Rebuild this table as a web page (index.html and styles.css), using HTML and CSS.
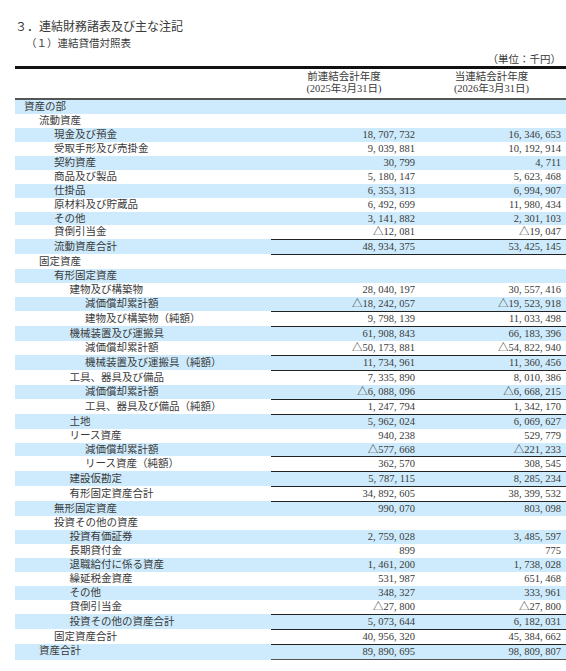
FILE: index.html
```html
<!DOCTYPE html>
<html lang="ja">
<head>
<meta charset="UTF-8" />
<meta name="viewport" content="width=device-width, initial-scale=1" />
<title>連結貸借対照表</title>
<link rel="stylesheet" href="styles.css">
</head>
<body>
  <h1 class="title">３．連結財務諸表及び主な注記</h1>
  <h2 class="subtitle">（１）連結貸借対照表</h2>
  <div class="unit">（単位：千円）</div>

  <section class="sheet" aria-label="連結貸借対照表">
    <div class="head">
      <div></div>
      <div class="period">前連結会計年度<br>(2025年3月31日)</div>
      <div class="period">当連結会計年度<br>(2026年3月31日)</div>
    </div>

    <div class="rows">
      <div class="row l0"><span class="label">資産の部</span><span class="num"></span><span class="num"></span></div>
      <div class="row l1"><span class="label">流動資産</span><span class="num"></span><span class="num"></span></div>
      <div class="row l2"><span class="label">現金及び預金</span><span class="num">18, 707, 732</span><span class="num">16, 346, 653</span></div>
      <div class="row l2"><span class="label">受取手形及び売掛金</span><span class="num">9, 039, 881</span><span class="num">10, 192, 914</span></div>
      <div class="row l2"><span class="label">契約資産</span><span class="num">30, 799</span><span class="num">4, 711</span></div>
      <div class="row l2"><span class="label">商品及び製品</span><span class="num">5, 180, 147</span><span class="num">5, 623, 468</span></div>
      <div class="row l2"><span class="label">仕掛品</span><span class="num">6, 353, 313</span><span class="num">6, 994, 907</span></div>
      <div class="row l2"><span class="label">原材料及び貯蔵品</span><span class="num">6, 492, 699</span><span class="num">11, 980, 434</span></div>
      <div class="row l2"><span class="label">その他</span><span class="num">3, 141, 882</span><span class="num">2, 301, 103</span></div>
      <div class="row l2"><span class="label">貸倒引当金</span><span class="num">△12, 081</span><span class="num">△19, 047</span></div>
      <div class="row l2 bt"><span class="label">流動資産合計</span><span class="num">48, 934, 375</span><span class="num">53, 425, 145</span></div>
      <div class="row l1 bt"><span class="label">固定資産</span><span class="num"></span><span class="num"></span></div>
      <div class="row l2"><span class="label">有形固定資産</span><span class="num"></span><span class="num"></span></div>
      <div class="row l3"><span class="label">建物及び構築物</span><span class="num">28, 040, 197</span><span class="num">30, 557, 416</span></div>
      <div class="row l4"><span class="label">減価償却累計額</span><span class="num">△18, 242, 057</span><span class="num">△19, 523, 918</span></div>
      <div class="row l4 bt"><span class="label">建物及び構築物（純額）</span><span class="num">9, 798, 139</span><span class="num">11, 033, 498</span></div>
      <div class="row l3 bt"><span class="label">機械装置及び運搬具</span><span class="num">61, 908, 843</span><span class="num">66, 183, 396</span></div>
      <div class="row l4"><span class="label">減価償却累計額</span><span class="num">△50, 173, 881</span><span class="num">△54, 822, 940</span></div>
      <div class="row l4 bt"><span class="label">機械装置及び運搬具（純額）</span><span class="num">11, 734, 961</span><span class="num">11, 360, 456</span></div>
      <div class="row l3 bt"><span class="label">工具、器具及び備品</span><span class="num">7, 335, 890</span><span class="num">8, 010, 386</span></div>
      <div class="row l4"><span class="label">減価償却累計額</span><span class="num">△6, 088, 096</span><span class="num">△6, 668, 215</span></div>
      <div class="row l4 bt"><span class="label">工具、器具及び備品（純額）</span><span class="num">1, 247, 794</span><span class="num">1, 342, 170</span></div>
      <div class="row l3 bt"><span class="label">土地</span><span class="num">5, 962, 024</span><span class="num">6, 069, 627</span></div>
      <div class="row l3"><span class="label">リース資産</span><span class="num">940, 238</span><span class="num">529, 779</span></div>
      <div class="row l4"><span class="label">減価償却累計額</span><span class="num">△577, 668</span><span class="num">△221, 233</span></div>
      <div class="row l4 bt"><span class="label">リース資産（純額）</span><span class="num">362, 570</span><span class="num">308, 545</span></div>
      <div class="row l3 bt"><span class="label">建設仮勘定</span><span class="num">5, 787, 115</span><span class="num">8, 285, 234</span></div>
      <div class="row l3 bt"><span class="label">有形固定資産合計</span><span class="num">34, 892, 605</span><span class="num">38, 399, 532</span></div>
      <div class="row l2 bt"><span class="label">無形固定資産</span><span class="num">990, 070</span><span class="num">803, 098</span></div>
      <div class="row l2"><span class="label">投資その他の資産</span><span class="num"></span><span class="num"></span></div>
      <div class="row l3"><span class="label">投資有価証券</span><span class="num">2, 759, 028</span><span class="num">3, 485, 597</span></div>
      <div class="row l3"><span class="label">長期貸付金</span><span class="num">899</span><span class="num">775</span></div>
      <div class="row l3"><span class="label">退職給付に係る資産</span><span class="num">1, 461, 200</span><span class="num">1, 738, 028</span></div>
      <div class="row l3"><span class="label">繰延税金資産</span><span class="num">531, 987</span><span class="num">651, 468</span></div>
      <div class="row l3"><span class="label">その他</span><span class="num">348, 327</span><span class="num">333, 961</span></div>
      <div class="row l3"><span class="label">貸倒引当金</span><span class="num">△27, 800</span><span class="num">△27, 800</span></div>
      <div class="row l3 bt"><span class="label">投資その他の資産合計</span><span class="num">5, 073, 644</span><span class="num">6, 182, 031</span></div>
      <div class="row l2 bt"><span class="label">固定資産合計</span><span class="num">40, 956, 320</span><span class="num">45, 384, 662</span></div>
      <div class="row l1 bt bb"><span class="label">資産合計</span><span class="num">89, 890, 695</span><span class="num">98, 809, 807</span></div>
    </div>
  </section>
</body>
</html>
```

FILE: styles.css
```css
* {
  box-sizing: border-box;
}
body {
  margin: 0;
  background: #fff;
  color: #3a3a3a;
  font-family: "Liberation Serif", "Noto Sans CJK JP", serif;
  font-size: 10.5px;
}

.title {
  margin: 0;
  padding: 20px 0 0 15px;
  font-size: 12px;
  line-height: 14px;
  font-weight: normal;
}
.subtitle {
  margin: 3px 0 0 26px;
  font-size: 10.5px;
  line-height: 13px;
  font-weight: normal;
}
.unit {
  margin-top: 3px;
  padding-right: 5px;
  text-align: right;
  line-height: 13px;
}

.sheet {
  margin-left: 15px;
  width: 551px;
}

.head,
.row {
  display: grid;
  grid-template-columns: 256px 146px 149px;
}
.head {
  border-top: 3px solid #111;
  border-bottom: 2px solid #555;
  padding: 2px 0 3px;
}
.period {
  text-align: center;
  line-height: 12px;
}

.row {
  align-items: end;
}
.rows .row:nth-child(odd) {
  background: #cdebfc;
}
.label,
.num {
  height: 13.95px;
  line-height: 13.95px;
  white-space: nowrap;
}
.num {
  text-align: right;
  padding-right: 2px;
}
.num + .num {
  padding-right: 5px;
}

/* rules over the amount columns */
.row.bt .num {
  border-top: 1px solid #222;
  height: 14.95px;
}
.row.bb {
  align-items: start;
}
.row.bb .num {
  border-bottom: 1px solid #555;
  height: 14.95px;
}
.row.bt.bb .num {
  height: 15.95px;
}

/* indentation levels */
.l0 .label { padding-left: 9px; }
.l1 .label { padding-left: 24px; }
.l2 .label { padding-left: 39px; }
.l3 .label { padding-left: 54.5px; }
.l4 .label { padding-left: 70px; }
```
